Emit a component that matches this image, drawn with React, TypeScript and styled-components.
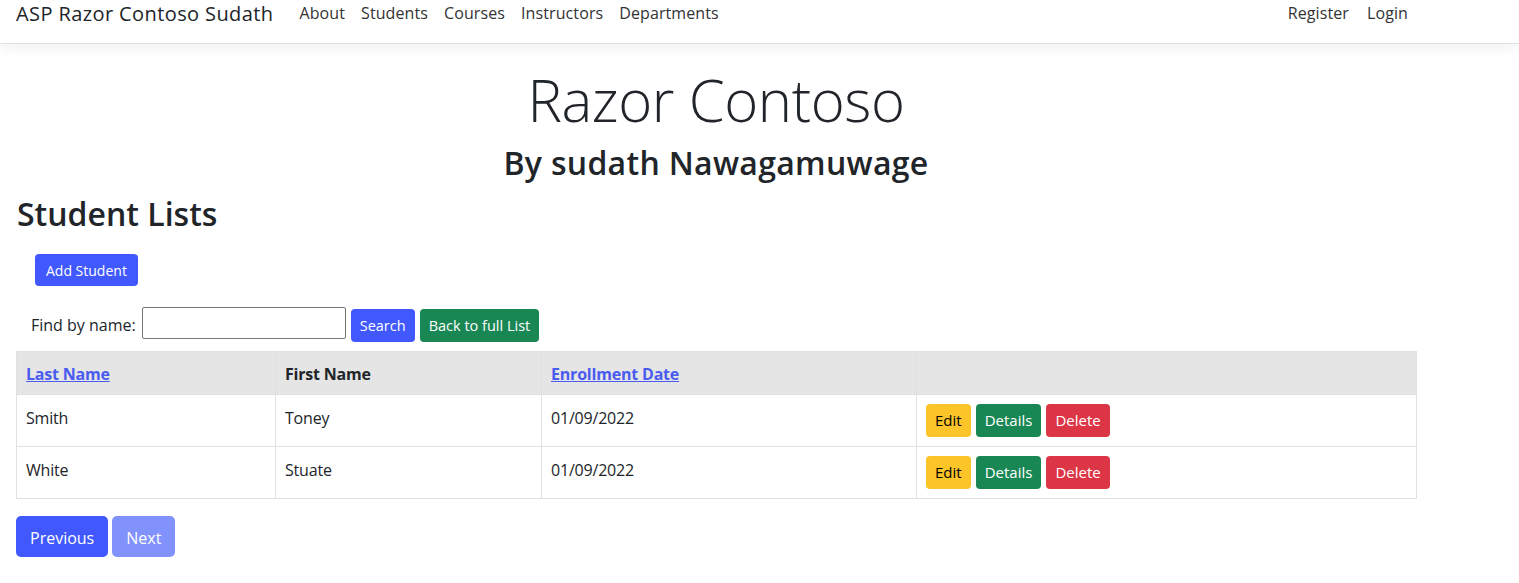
import React from "react";
import styled, { createGlobalStyle, css } from "styled-components";

const Global = createGlobalStyle`
  * { box-sizing: border-box; }
  body {
    margin: 0;
    font-family: "Open Sans", "Noto Sans", Arial, sans-serif;
    color: #212529;
    background: #fff;
  }
`;

const Nav = styled.nav`
  height: 44px;
  border-bottom: 1px solid #dee2e6;
  box-shadow: 0 4px 14px rgba(0, 0, 0, 0.06);
  background: #fff;
`;

const NavInner = styled.div`
  width: 1400px;
  margin-left: 16px;
  height: 26px;
  display: flex;
  align-items: center;
`;

const Brand = styled.a`
  font-size: 20px;
  color: #212529;
  text-decoration: none;
  margin-right: 18px;
  letter-spacing: 0.4px;
`;

const NavLink = styled.a`
  font-size: 16px;
  color: #333;
  padding: 0 8px;
  text-decoration: none;
  letter-spacing: 0.1px;
`;

const NavRight = styled.div`
  margin-left: auto;
  display: flex;
  gap: 2px;
`;

const Main = styled.main`
  width: 1400px;
  margin-left: 16px;
`;

const Title = styled.h1`
  margin: 20px 0 0;
  font-size: 58px;
  font-weight: 300;
  line-height: 72px;
  text-align: center;
  letter-spacing: -0.4px;
`;

const SubTitle = styled.h3`
  margin: 9px 0 0;
  font-size: 32px;
  font-weight: 600;
  line-height: 36px;
  text-align: center;
  letter-spacing: 0.3px;
`;

const SectionTitle = styled.h2`
  margin: 14px 0 0 1px;
  font-size: 32px;
  font-weight: 600;
  line-height: 38px;
`;

type Variant = "primary" | "success" | "danger" | "warning";

const colors: Record<Variant, { bg: string; fg: string }> = {
  primary: { bg: "#4058fd", fg: "#fff" },
  success: { bg: "#198754", fg: "#fff" },
  danger: { bg: "#dc3545", fg: "#fff" },
  warning: { bg: "#fbc52a", fg: "#000" },
};

const Btn = styled.button<{ $v: Variant; $lg?: boolean; $disabled?: boolean }>`
  border: none;
  border-radius: 4px;
  font-family: inherit;
  font-size: 15px;
  line-height: 1;
  height: 33px;
  padding: 0 9px;
  background: ${(p) => colors[p.$v].bg};
  color: ${(p) => colors[p.$v].fg};
  cursor: pointer;
  ${(p) =>
    p.$lg &&
    css`
      height: 41px;
      font-size: 16px;
      padding: 3px 14px 0;
      border-radius: 5px;
    `}
  ${(p) =>
    p.$disabled &&
    css`
      opacity: 0.65;
    `}
`;

const AddRow = styled.div`
  margin: 21px 0 0 19px;
  display: flex;
`;

const AddBtn = styled(Btn)`
  height: 32px;
  font-size: 14px;
  padding: 1px 11px 0;
`;

const FindRow = styled.form`
  margin: 21px 0 0 15px;
  display: flex;
  align-items: flex-start;
  gap: 5px;
`;

const FindLabel = styled.label`
  font-size: 16px;
  line-height: 32px;
  margin-right: 1px;
  padding-top: 2px;
`;

const Input = styled.input`
  width: 204px;
  height: 32px;
  border: 1px solid #767676;
  border-radius: 2px;
  font-family: inherit;
`;

const FindBtn = styled(Btn)`
  margin-top: 2px;
  font-size: 14.5px;
  padding: 1px 9px 0;
`;

const Table = styled.table`
  margin-top: 9px;
  width: 1400px;
  border-collapse: collapse;
  table-layout: fixed;
  border: 1px solid #dee2e6;
`;

const Th = styled.th<{ $w: number }>`
  width: ${(p) => p.$w}px;
  height: 43px;
  background: #e5e5e5;
  text-align: left;
  font-size: 16px;
  font-weight: 700;
  padding: 2px 9px 0;
  border-left: 1px solid #dee2e6;
  letter-spacing: -0.2px;
`;

const HeadLink = styled.a`
  color: #4a5cf0;
  text-decoration: underline;
`;

const Td = styled.td`
  height: 52px;
  font-size: 16px;
  padding: 0 9px 6px;
  border-top: 1px solid #dee2e6;
  border-left: 1px solid #dee2e6;
  vertical-align: middle;
  letter-spacing: -0.2px;
`;

const ActionTd = styled(Td)`
  padding-bottom: 0;
`;

const Actions = styled.div`
  display: flex;
  gap: 5px;
`;

const Pager = styled.div`
  margin-top: 17px;
  display: flex;
  gap: 4px;
`;

const students = [
  { last: "Smith", first: "Toney", date: "01/09/2022" },
  { last: "White", first: "Stuate", date: "01/09/2022" },
];

export default function App() {
  return (
    <>
      <Global />
      <Nav>
        <NavInner>
          <Brand href="#">ASP Razor Contoso Sudath</Brand>
          <NavLink href="#">About</NavLink>
          <NavLink href="#">Students</NavLink>
          <NavLink href="#">Courses</NavLink>
          <NavLink href="#">Instructors</NavLink>
          <NavLink href="#">Departments</NavLink>
          <NavRight>
            <NavLink href="#">Register</NavLink>
            <NavLink href="#">Login</NavLink>
          </NavRight>
        </NavInner>
      </Nav>
      <Main>
        <Title>Razor Contoso</Title>
        <SubTitle>By sudath Nawagamuwage</SubTitle>
        <SectionTitle>Student Lists</SectionTitle>
        <AddRow>
          <AddBtn $v="primary">Add Student</AddBtn>
        </AddRow>
        <FindRow onSubmit={(e) => e.preventDefault()}>
          <FindLabel>Find by name:</FindLabel>
          <Input type="text" />
          <FindBtn $v="primary">Search</FindBtn>
          <FindBtn $v="success" type="button">
            Back to full List
          </FindBtn>
        </FindRow>
        <Table>
          <thead>
            <tr>
              <Th $w={259}>
                <HeadLink href="#">Last Name</HeadLink>
              </Th>
              <Th $w={266}>First Name</Th>
              <Th $w={375}>
                <HeadLink href="#">Enrollment Date</HeadLink>
              </Th>
              <Th $w={500}></Th>
            </tr>
          </thead>
          <tbody>
            {students.map((s) => (
              <tr key={s.last}>
                <Td>{s.last}</Td>
                <Td>{s.first}</Td>
                <Td>{s.date}</Td>
                <ActionTd>
                  <Actions>
                    <Btn $v="warning">Edit</Btn>
                    <Btn $v="success">Details</Btn>
                    <Btn $v="danger">Delete</Btn>
                  </Actions>
                </ActionTd>
              </tr>
            ))}
          </tbody>
        </Table>
        <Pager>
          <Btn $v="primary" $lg>
            Previous
          </Btn>
          <Btn $v="primary" $lg $disabled>
            Next
          </Btn>
        </Pager>
      </Main>
    </>
  );
}
